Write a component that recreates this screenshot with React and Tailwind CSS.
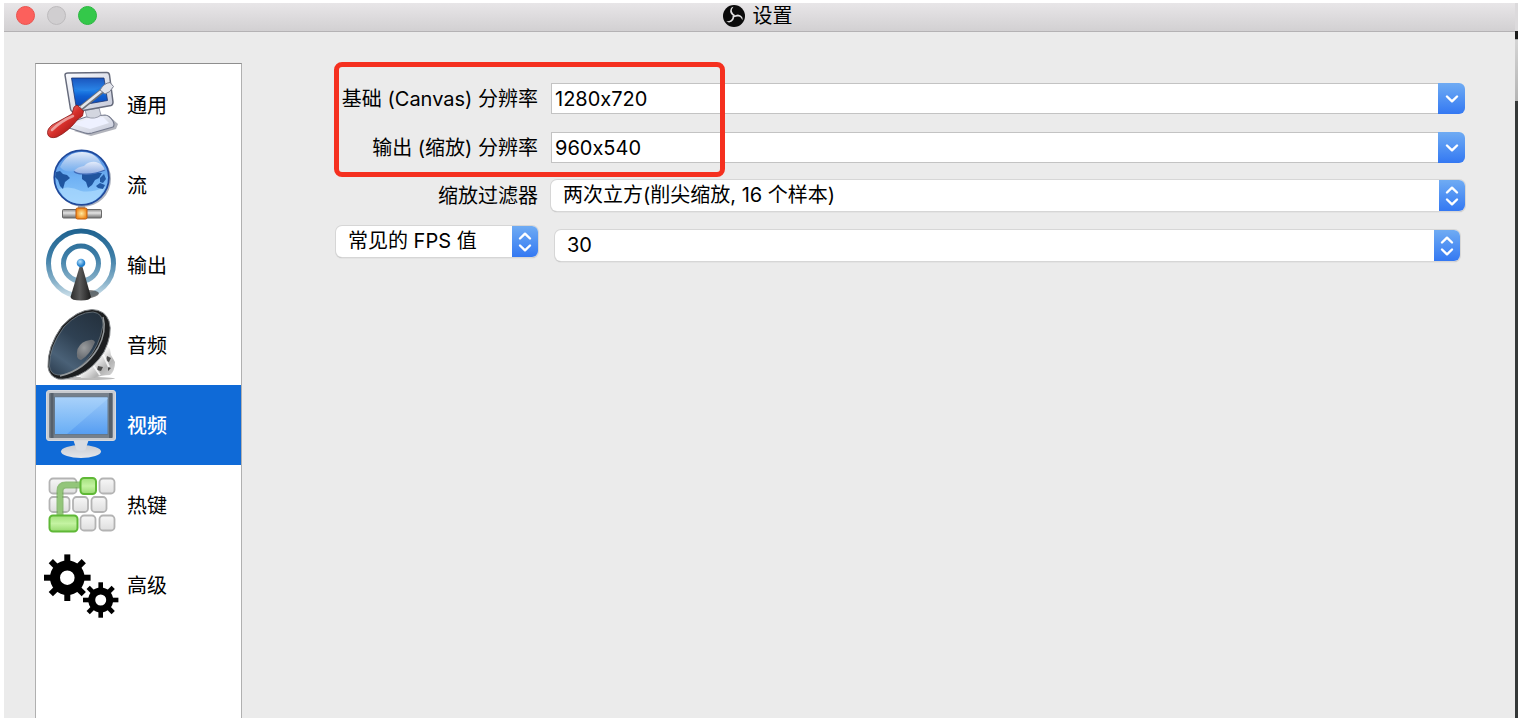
import { useId, useState } from "react";

function GeneralIcon() {
  return (
    <svg viewBox="0 0 72 72" className="size-18 shrink-0 overflow-visible" aria-hidden="true">
      <defs>
        <linearGradient id="gen-screen" x1="0" y1="0" x2="0" y2="1">
          <stop offset="0" stopColor="#0b3fae" />
          <stop offset="0.45" stopColor="#1f7fe6" />
          <stop offset="0.65" stopColor="#0f5fd2" />
          <stop offset="1" stopColor="#0d47b4" />
        </linearGradient>
        <linearGradient id="gen-case" x1="0" y1="0" x2="1" y2="1">
          <stop offset="0" stopColor="#fbfcff" />
          <stop offset="1" stopColor="#c4c8d8" />
        </linearGradient>
        <linearGradient id="gen-handle" x1="0" y1="0" x2="1" y2="1">
          <stop offset="0.2" stopColor="#f0938c" />
          <stop offset="0.5" stopColor="#d8312c" />
          <stop offset="0.9" stopColor="#8e0d0d" />
        </linearGradient>
      </defs>
      <path d="M29 62 L46 67 L71 60 L73 55 L64 47 Z" fill="#55586a" opacity="0.45" />
      <path d="M21 56 Q21 53 29 52 L41 48 L60 46 Q64 46 68 52 Q70 56 68 58 L47 64 Q43 65 40 64 L24 59 Q21 58 21 56 Z" fill="url(#gen-case)" stroke="#777c8f" strokeWidth="1.200" />
      <path d="M28 55 L42 50 L58 48 L64 54 L45 60 Z" fill="#eef1ff" />
      <path d="M40 41 L54 39 L56 46 Q50 51 42 48 Z" fill="#d3d6e0" stroke="#8b8fa0" strokeWidth="0.800" />
      <path d="M20 6 Q20 4 23 4 L62 3.500 Q64 3.500 64.500 6 L68 33 Q68 36 66 36.500 L30 43 Q26 43 25.500 40 Z" fill="url(#gen-case)" stroke="#666b7c" strokeWidth="1.500" />
      <path d="M26.500 9 L59 9 L62.500 31.500 L31 37 Z" fill="url(#gen-screen)" stroke="#20356d" strokeWidth="0.800" />
      <path d="M27 9.500 L58.500 9.500 L60 17 Q45 25 29.500 20 Z" fill="#4c9bf0" opacity="0.25" />
      <path d="M36 39 L57 22" stroke="#6c7077" strokeWidth="5" />
      <path d="M36 38.400 L57 21.400" stroke="#e4e6ea" strokeWidth="2.600" />
      <path d="M55 21 Q59 14 65 13.500 L68.500 17.500 Q65 24 60 25 Z" fill="#e1e3ea" stroke="#7a7e8d" strokeWidth="1" />
      <path d="M29 38 L32 36 L38.500 42 L37.500 47 L33 50 Q24 62 12 68 Q5 70 3 66 Q1 61 7 56 L27 45 Z" fill="url(#gen-handle)" stroke="#8a1515" strokeWidth="0.800" />
      <path d="M7 61 Q16 52 28 47" stroke="#fff" strokeWidth="2.500" strokeLinecap="round" opacity="0.5" fill="none" />
    </svg>
  );
}

function StreamIcon() {
  return (
    <svg viewBox="0 0 72 72" className="size-18 shrink-0 overflow-visible" aria-hidden="true">
      <defs>
        <linearGradient id="str-sea" x1="0" y1="0" x2="0" y2="1">
          <stop offset="0" stopColor="#4c87dc" />
          <stop offset="0.5" stopColor="#6fb1f4" />
          <stop offset="1" stopColor="#8fc9fa" />
        </linearGradient>
        <linearGradient id="str-gloss" x1="0" y1="0" x2="0" y2="1">
          <stop offset="0" stopColor="#fff" stopOpacity="0.85" />
          <stop offset="1" stopColor="#fff" stopOpacity="0.1" />
        </linearGradient>
        <linearGradient id="str-cloud" x1="0" y1="0" x2="0" y2="1">
          <stop offset="0" stopColor="#e2ebfb" />
          <stop offset="1" stopColor="#8fadE2" />
        </linearGradient>
        <linearGradient id="str-pipe" x1="0" y1="0" x2="0" y2="1">
          <stop offset="0" stopColor="#8d8d8d" />
          <stop offset="0.4" stopColor="#e4e4e4" />
          <stop offset="1" stopColor="#6d6d6d" />
        </linearGradient>
        <radialGradient id="str-node">
          <stop offset="0" stopColor="#ffe9a0" />
          <stop offset="1" stopColor="#f08a1c" />
        </radialGradient>
      </defs>
      <circle cx="38" cy="30" r="28" fill="#33415f" opacity="0.4" />
      <rect x="33" y="55" width="7" height="7" fill="#a3a6ad" />
      <circle cx="36.600" cy="28.600" r="27.300" fill="url(#str-sea)" stroke="#204a9c" strokeWidth="1.800" />
      <path d="M14 40 Q25 36 36 42 Q47 44 60 38 Q54 54 36 55 Q20 54 14 40 Z" fill="#b4e0ff" opacity="0.6" />
      <path d="M15 18 Q22 3 37 3 Q52 3 58 18 Q55 13 45 15 Q40 21 29 22 Q20 24 15 18 Z" fill="url(#str-gloss)" />
      <path d="M11 23 L15 22 L18 25 L22 26 L25 29 L20 33 L18 40 L15 37 L13 31 L10 28 Z" fill="#20559f" />
      <path d="M37 25 L48 24 L57 24 L54 29 L50 31 L47 36 L43 39 L41 33 L37 30 Z" fill="#20559f" />
      <path d="M55 29 L59 25 L61 30 L58 34 L55 33 Z M51 37 L55 34 L60 36 L58 40 L53 39 Z" fill="#235aa5" />
      <path d="M29 22 Q32 18 39 17 Q44 12 51 13 Q58 15 60 21 Q48 26 38 25 Q31 25 29 22 Z" fill="url(#str-cloud)" />
      <path d="M29 22.500 Q32 25 38 25 Q49 26 60 21" fill="none" stroke="#416cb8" strokeWidth="1.200" />
      <rect x="17.500" y="60.500" width="39" height="8.500" rx="1" fill="url(#str-pipe)" stroke="#696969" />
      <rect x="31" y="59" width="11" height="11" rx="1.500" fill="url(#str-node)" stroke="#bf5a0c" />
    </svg>
  );
}

function OutputIcon() {
  return (
    <svg viewBox="0 0 72 72" className="size-18 shrink-0 overflow-visible" aria-hidden="true">
      <defs>
        <linearGradient id="out-ring" x1="0" y1="0" x2="0" y2="72" gradientUnits="userSpaceOnUse">
          <stop offset="0" stopColor="#1f628f" />
          <stop offset="0.4" stopColor="#3f7fa8" />
          <stop offset="0.75" stopColor="#8db5cc" />
          <stop offset="1" stopColor="#e1edf3" />
        </linearGradient>
        <linearGradient id="out-cone" x1="0" y1="0" x2="1" y2="0">
          <stop offset="0" stopColor="#2c2c2c" />
          <stop offset="0.45" stopColor="#595959" />
          <stop offset="1" stopColor="#1b1b1b" />
        </linearGradient>
        <radialGradient id="out-ball" cx="0.4" cy="0.35">
          <stop offset="0" stopColor="#b8e4ff" />
          <stop offset="1" stopColor="#2480cc" />
        </radialGradient>
      </defs>
      <circle cx="36" cy="34.500" r="32.500" fill="none" stroke="url(#out-ring)" strokeWidth="5" />
      <circle cx="36" cy="34.500" r="17.500" fill="none" stroke="url(#out-ring)" strokeWidth="5" />
      <path d="M40 70 Q54 68 54 64 Q52 61 43 61 Z" fill="#333" opacity="0.65" />
      <path d="M34.500 38 L37.500 38 L46 68 Q45 71.500 36 71.500 Q26 71.500 25.500 68 Z" fill="url(#out-cone)" />
      <circle cx="36" cy="34" r="4.300" fill="url(#out-ball)" />
    </svg>
  );
}

function AudioIcon() {
  return (
    <svg viewBox="0 0 72 72" className="size-18 shrink-0 overflow-visible" aria-hidden="true">
      <defs>
        <linearGradient id="aud-cone" x1="0.8" y1="0" x2="0.2" y2="1">
          <stop offset="0" stopColor="#25323f" />
          <stop offset="0.45" stopColor="#2f4153" />
          <stop offset="0.8" stopColor="#4a6177" />
          <stop offset="1" stopColor="#34475a" />
        </linearGradient>
        <linearGradient id="aud-chrome" x1="0" y1="0" x2="1" y2="1">
          <stop offset="0" stopColor="#8c8c8c" />
          <stop offset="0.45" stopColor="#f3f3f3" />
          <stop offset="0.7" stopColor="#b4b4b4" />
          <stop offset="1" stopColor="#dedede" />
        </linearGradient>
        <radialGradient id="aud-cap" cx="0.4" cy="0.4">
          <stop offset="0" stopColor="#9a9c9e" />
          <stop offset="1" stopColor="#6c7075" />
        </radialGradient>
      </defs>
      <ellipse cx="42" cy="69.500" rx="28" ry="1.500" fill="#555" opacity="0.4" />
      <path d="M61 36 L65 40 L66 46 L70 53 Q70 62 65 66 Q56 66 50 69 L36 69 Q34 66 36 62 Z" fill="url(#aud-chrome)" />
      <path d="M62 47 L66 49 L64 53 L61 52 Z M53 57 L58 58 L56 62 L52 61 Z M63 58 L66 59 L63 62 Z" fill="#4c4c4c" />
      <path d="M58 45 L64 58 M48 56 L55 66" stroke="#fff" strokeWidth="2" opacity="0.8" />
      <path d="M3 58 Q2 38 17 17 Q32 1 47 0.500 Q60 1 64 12 Q68 25 59 43 Q49 59 34 66 Q22 71 13 70 Q4 67 3 58 Z" fill="#1c1e20" stroke="#85898c" strokeWidth="1" />
      <path d="M4.500 57 Q4 38 19 18 Q33 3 48 3 Q58 4 58 16 Q55 37 41 52 Q27 67 13 66 Q5 65 4.500 57 Z" fill="url(#aud-cone)" stroke="#7a848b" strokeWidth="0.700" />
      <path d="M58 8 Q62 22 53 39 Q40 61 15 67" fill="none" stroke="#93989b" strokeWidth="1.500" />
      <path d="M45 31 Q36 32 32.500 40 Q30 50 36 51 Q45 46 50 33 Q48 30 45 31 Z" fill="url(#aud-cap)" />
    </svg>
  );
}

function VideoIcon() {
  return (
    <svg viewBox="0 0 72 72" className="size-18 shrink-0 overflow-visible" aria-hidden="true">
      <defs>
        <linearGradient id="vid-screen" x1="0" y1="0" x2="0" y2="1">
          <stop offset="0" stopColor="#9fcbf8" />
          <stop offset="1" stopColor="#559df2" />
        </linearGradient>
        <linearGradient id="vid-gloss" x1="0" y1="0" x2="0" y2="1">
          <stop offset="0" stopColor="#a8d1fa" />
          <stop offset="1" stopColor="#69aef5" />
        </linearGradient>
        <linearGradient id="vid-base" x1="0" y1="0" x2="0" y2="1">
          <stop offset="0" stopColor="#c9ccd2" />
          <stop offset="1" stopColor="#e4e6ea" />
        </linearGradient>
      </defs>
      <ellipse cx="36" cy="62.500" rx="20" ry="6.500" fill="url(#vid-base)" />
      <path d="M28 50 L44 50 L41 59 Q41 62 36 62 Q31 62 31 59 Z" fill="#d9dce2" />
      <rect x="1.500" y="1.500" width="69" height="50" rx="2.500" fill="#c8cbd0" stroke="#d6d9de" />
      <rect x="4" y="4" width="64" height="45" rx="1" fill="#76808b" />
      <path d="M7 4 V49 M65.500 4 V49" stroke="#56606b" strokeWidth="3" />
      <rect x="9.500" y="8" width="53.500" height="37.500" fill="url(#vid-screen)" stroke="#64788c" />
      <path d="M10 8.500 H62.500 V10 L22 45 H10 Z" fill="url(#vid-gloss)" />
    </svg>
  );
}

function HotkeysIcon() {
  const keys = [
    [4.5, 9.5, 27],
    [54.5, 9.5, 15],
    [4.5, 28, 20],
    [28, 28, 15],
    [46.5, 28, 15],
    [35.5, 46.5, 15],
    [54.5, 46.5, 15],
  ];
  return (
    <svg viewBox="0 0 72 72" className="size-18 shrink-0 overflow-visible" aria-hidden="true">
      <defs>
        <linearGradient id="key-grey" x1="0" y1="0" x2="0" y2="1">
          <stop offset="0" stopColor="#f7f7f7" />
          <stop offset="1" stopColor="#dedede" />
        </linearGradient>
        <linearGradient id="key-green" x1="0" y1="0" x2="0" y2="1">
          <stop offset="0" stopColor="#a2e07b" />
          <stop offset="0.5" stopColor="#c4f3a2" />
          <stop offset="1" stopColor="#98da70" />
        </linearGradient>
      </defs>
      {keys.map(([x, y, w]) => (
        <rect key={`${x}-${y}`} x={x} y={y} width={w} height="15" rx="3.500" fill="url(#key-grey)" stroke="#b3b3b3" strokeWidth="1.800" />
      ))}
      <path d="M15 46 V22 Q15 16 21 16 H36" fill="none" stroke="#6fae52" strokeWidth="7" opacity="0.75" />
      <path d="M15 46 V22 Q15 16 21 16 H36" fill="none" stroke="#93c67a" strokeWidth="4" />
      <rect x="35.500" y="9" width="15.500" height="16" rx="3.500" fill="url(#key-green)" stroke="#5fb836" strokeWidth="2" />
      <rect x="4.500" y="46.500" width="28" height="16" rx="3.500" fill="url(#key-green)" stroke="#5fb836" strokeWidth="2" />
    </svg>
  );
}

function AdvancedIcon() {
  const turns = [0, 45, 90, 135, 180, 225, 270, 315];
  return (
    <svg viewBox="0 0 72 72" className="size-18 shrink-0 overflow-visible" aria-hidden="true">
      <g transform="translate(22.300 28.700)">
        {turns.map((a) => (
          <rect key={a} x="-3" y="-23.300" width="6" height="9" transform={`rotate(${a})`} />
        ))}
        <circle r="12.300" fill="none" stroke="#000" strokeWidth="10" />
      </g>
      <g transform="translate(55.700 51)">
        {turns.map((a) => (
          <rect key={a} x="-2.300" y="-17.700" width="4.600" height="7" transform={`rotate(${a})`} />
        ))}
        <circle r="9" fill="none" stroke="#000" strokeWidth="7" />
      </g>
    </svg>
  );
}

function ObsLogo() {
  return (
    <svg viewBox="-11 -11 22 22" className="size-[22px]" aria-hidden="true">
      <circle r="11" fill="#0b0b0b" />
      {[0, 120, 240].map((a) => (
        <path
          key={a}
          d="M0.500 0.500 Q-5.600 -2.500 -3.200 -7.600 Q-2.400 -8.900 -0.500 -9.300 Q-3 -6.500 -1.800 -4 Q-1 -2 1 -1 Z"
          fill="#e2e1e2"
          transform={`rotate(${a})`}
        />
      ))}
    </svg>
  );
}

const sections = [
  { name: "通用", Icon: GeneralIcon },
  { name: "流", Icon: StreamIcon },
  { name: "输出", Icon: OutputIcon },
  { name: "音频", Icon: AudioIcon },
  { name: "视频", Icon: VideoIcon },
  { name: "热键", Icon: HotkeysIcon },
  { name: "高级", Icon: AdvancedIcon },
];

function ChevronDown() {
  return (
    <svg viewBox="0 0 14 8" className="h-2 w-3.5" fill="none" stroke="#fff" strokeWidth="2.400" strokeLinecap="round" strokeLinejoin="round" aria-hidden="true">
      <path d="M2 1.500 L7 6.300 L12 1.500" />
    </svg>
  );
}

function UpDown() {
  return (
    <svg viewBox="0 0 14 20" className="h-5 w-3.5" fill="none" stroke="#fff" strokeWidth="2.400" strokeLinecap="round" strokeLinejoin="round" aria-hidden="true">
      <path d="M2 6.500 L7 1.700 L12 6.500 M2 13.500 L7 18.300 L12 13.500" />
    </svg>
  );
}

function ComboBox({ id, initial }) {
  const [value, setValue] = useState(initial);
  return (
    <div className="flex h-[31px] min-w-0 flex-1">
      <input
        id={id}
        type="text"
        value={value}
        onChange={(e) => setValue(e.target.value)}
        className="min-w-0 flex-1 border border-r-0 border-[#c3c3c3] bg-white pl-[3px] outline-none"
      />
      <button
        type="button"
        aria-label="显示选项"
        className="flex w-[27px] items-center justify-center rounded-r-md bg-linear-to-b from-[#6fabf3] to-[#3478f2]"
      >
        <ChevronDown />
      </button>
    </div>
  );
}

function PopUp({ id, label, options }) {
  return (
    <div className="grid h-[31px] min-w-0 flex-1 grid-cols-[minmax(0,1fr)_26px] overflow-hidden rounded-md bg-white shadow-[0_0_0_1px_#d6d6d6,0_1px_1px_#999]">
      <select
        id={id}
        aria-label={label}
        className="col-span-2 col-start-1 row-start-1 appearance-none truncate bg-transparent pb-0.5 pl-3 outline-none"
      >
        {options.map((o) => (
          <option key={o}>{o}</option>
        ))}
      </select>
      <span className="pointer-events-none col-start-2 row-start-1 flex items-center justify-center bg-linear-to-b from-[#6fabf3] to-[#3478f2]">
        <UpDown />
      </span>
    </div>
  );
}

export default function App() {
  const [active, setActive] = useState("视频");
  const uid = useId();
  return (
    <div className="flex h-screen bg-white pt-[3px] pr-2 pb-[6px] pl-1 font-[Inter,'Noto_Sans_CJK_SC',sans-serif] text-xl leading-6 text-black [font-feature-settings:'calt'_0]">
      <div className="flex min-w-0 flex-1 flex-col bg-[#ebebeb]">
        <header className="grid h-[29px] shrink-0 grid-cols-[1fr_auto_1fr] items-center border-b border-[#b4b2b4] bg-linear-to-b from-[#e8e6e8] to-[#d2d0d2] pr-4 pl-3">
          <div className="flex gap-3 pb-1">
            <button type="button" aria-label="关闭" className="size-[19px] rounded-full border border-[#e9534e] bg-[#fc605c]" />
            <button type="button" aria-label="最小化" className="size-[19px] rounded-full border border-[#bdbbbd] bg-[#d0ced0]" />
            <button type="button" aria-label="缩放" className="size-[19px] rounded-full border border-[#2bb741] bg-[#34c84a]" />
          </div>
          <h1 className="flex items-center gap-2 pb-0.5">
            <ObsLogo />
            设置
          </h1>
        </header>

        <main className="flex min-h-0 flex-1 pt-[31px] pl-[31px]">
          <nav className="w-[207px] shrink-0 overflow-hidden border border-b-0 border-[#b0b0b0] border-t-[#8e8e8e] bg-white pt-px" aria-label="设置分类">
            {sections.map(({ name, Icon }) => (
              <button
                key={name}
                type="button"
                onClick={() => setActive(name)}
                className={
                  active === name
                    ? "flex h-20 w-full items-center gap-[10px] bg-[#0f6ad7] pl-[9px] font-medium text-white"
                    : "flex h-20 w-full items-center gap-[10px] pl-[9px]"
                }
              >
                <Icon />
                <span className="pt-0.5">{name}</span>
              </button>
            ))}
          </nav>

          <form className="relative min-w-0 flex-1 pt-5 pr-[50px] pl-[94px]" onSubmit={(e) => e.preventDefault()}>
            <div className="flex items-center gap-[13px]">
              <label htmlFor={`${uid}-base`} className="w-[202px] shrink-0 text-right whitespace-nowrap">基础 (Canvas) 分辨率</label>
              <ComboBox id={`${uid}-base`} initial="1280x720" />
            </div>
            <div className="mt-[18px] flex items-center gap-[13px]">
              <label htmlFor={`${uid}-out`} className="w-[202px] shrink-0 text-right whitespace-nowrap">输出 (缩放) 分辨率</label>
              <ComboBox id={`${uid}-out`} initial="960x540" />
            </div>
            <div className="mt-[17px] flex items-center gap-[13px]">
              <label htmlFor={`${uid}-filter`} className="w-[202px] shrink-0 text-right whitespace-nowrap">缩放过滤器</label>
              <PopUp id={`${uid}-filter`} options={["两次立方(削尖缩放, 16 个样本)"]} />
            </div>
            <div className="mt-[15px] flex gap-[17px]">
              <div className="flex w-[202px] shrink-0">
                <PopUp label="FPS 类型" options={["常见的 FPS 值"]} />
              </div>
              <div className="flex min-w-0 flex-1 pt-1 pr-[5px]">
                <PopUp label="FPS 值" options={["30"]} />
              </div>
            </div>
            <div className="pointer-events-none absolute top-[-1px] left-[92px] h-[115px] w-[391px] rounded-lg border-5 border-[#f5301f]" />
          </form>
        </main>
      </div>

      <div className="flex w-[3px] shrink-0 flex-col bg-[#353838]" aria-hidden="true">
        <div className="h-7 bg-[#dcdadc]" />
        <div className="h-2 bg-[#1c1c1c]" />
        <div className="h-[62px] border-t border-[#a8a8a8] bg-linear-to-b from-[#d4d4d4] to-[#b4b4b4]" />
      </div>
    </div>
  );
}
